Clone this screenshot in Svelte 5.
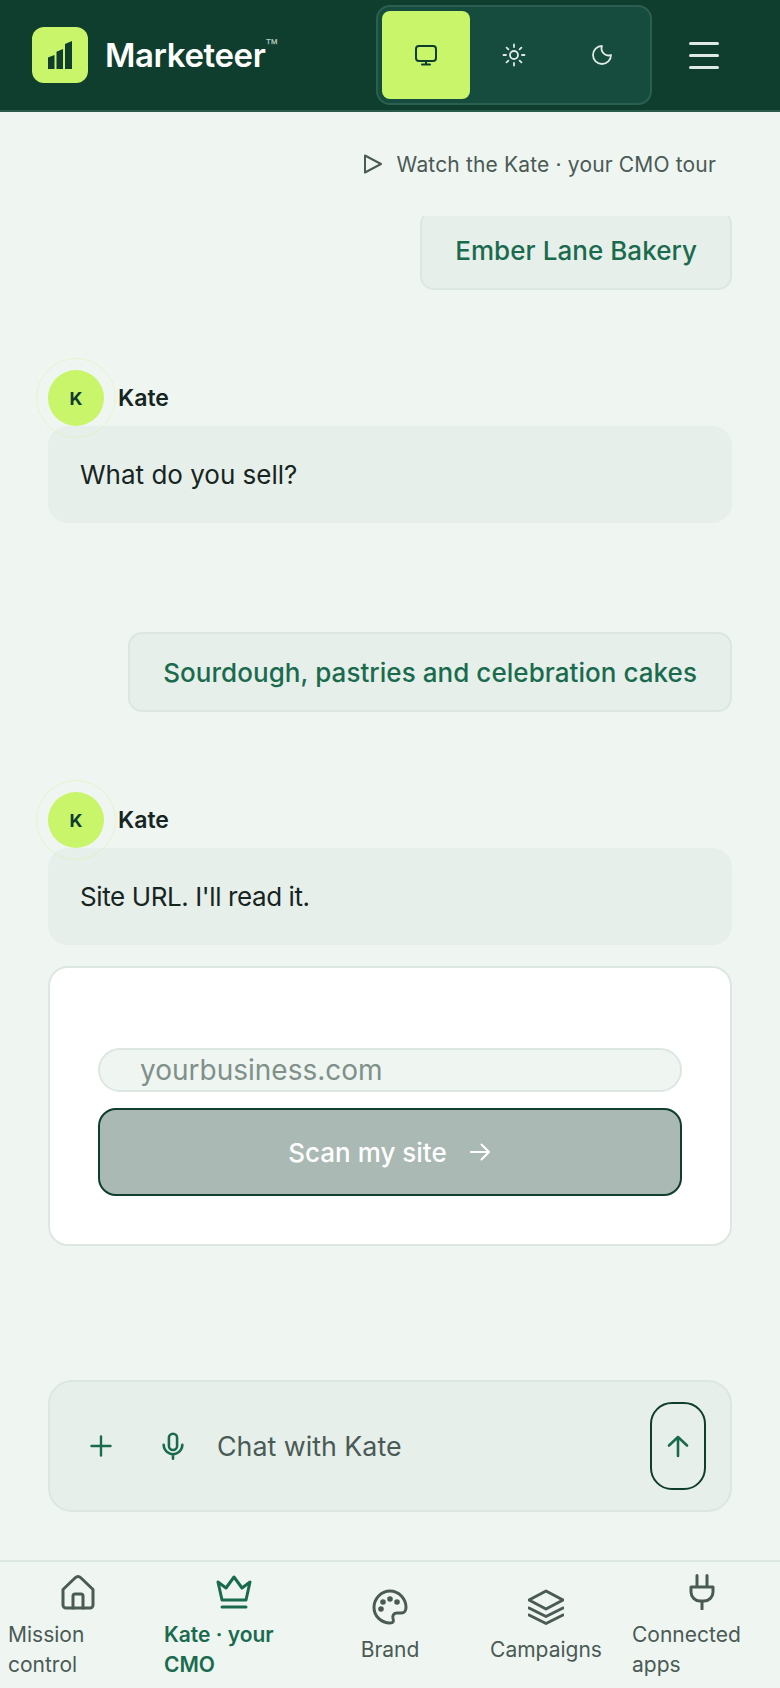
<script>
  const nav = [
    { id: 'home', label: 'Mission control', left: true },
    { id: 'crown', label: 'Kate · your CMO', left: true, active: true },
    { id: 'palette', label: 'Brand' },
    { id: 'layers', label: 'Campaigns' },
    { id: 'plug', label: 'Connected apps', left: true }
  ];
</script>

<div class="page">
  <header class="header">
    <div class="brand">
      <div class="logo">
        <svg viewBox="0 0 24 28" width="24" height="28" fill="#0f3d2e" aria-hidden="true">
          <path d="M0 16.500 6.500 14v14H0zM8.500 10.800 15 8v20H8.500zM17 3 24 0v28h-7z" />
        </svg>
      </div>
      <span class="wordmark">Marketeer<sup>™</sup></span>
    </div>
    <div class="theme">
      <button class="theme-btn on" aria-label="System">
        <svg viewBox="0 0 24 24" width="24" height="24" fill="none" stroke="#0f3d2e" stroke-width="2" stroke-linecap="round" stroke-linejoin="round"><rect x="2" y="3" width="20" height="15" rx="3"/><path d="M8 21.500h8M12 18v3.500"/></svg>
      </button>
      <button class="theme-btn" aria-label="Light">
        <svg viewBox="0 0 24 24" width="24" height="24" fill="none" stroke="#dfe9e5" stroke-width="1.800" stroke-linecap="round"><circle cx="12" cy="12" r="4"/><path d="M12 1.500v2.500M12 20v2.500M1.500 12H4M20 12h2.500M4.600 4.600l1.800 1.800M17.600 17.600l1.800 1.800M4.600 19.400l1.800-1.800M17.600 6.400l1.800-1.800"/></svg>
      </button>
      <button class="theme-btn" aria-label="Dark">
        <svg viewBox="0 0 24 24" width="24" height="24" fill="none" stroke="#dfe9e5" stroke-width="1.800" stroke-linecap="round" stroke-linejoin="round"><path d="M12 3a9 9 0 1 0 9 9 7 7 0 0 1-9-9z"/></svg>
      </button>
    </div>
    <div class="burger" aria-label="Menu"><i></i><i></i><i></i></div>
  </header>

  <main class="main">
    <div class="tour">
      <svg viewBox="0 0 24 24" width="24" height="24" fill="none" stroke="#4a5a55" stroke-width="2" stroke-linejoin="round"><path d="M5 3.500 21 12 5 20.500z"/></svg>
      <span>Watch the Kate · your CMO tour</span>
    </div>

    <div class="thread">
      <div class="bubble user">Ember Lane Bakery</div>

      <div class="who">
        <div class="avatar">K</div><span>Kate</span>
      </div>
      <div class="bubble kate">What do you sell?</div>

      <div class="bubble user second">Sourdough, pastries and celebration cakes</div>

      <div class="who">
        <div class="avatar">K</div><span>Kate</span>
      </div>
      <div class="bubble kate tight">Site URL. I'll read it.</div>

      <div class="card">
        <div class="input">yourbusiness.com</div>
        <div class="scan">
          <span>Scan my site</span>
          <svg viewBox="0 0 24 24" width="24" height="24" fill="none" stroke="#fff" stroke-width="2" stroke-linecap="round" stroke-linejoin="round"><path d="M3 12h18M13.500 4.500 21 12l-7.500 7.500"/></svg>
        </div>
      </div>
    </div>

    <div class="composer">
      <div class="tool">
        <svg viewBox="0 0 24 24" width="24" height="24" fill="none" stroke="#1a6b4e" stroke-width="2.400" stroke-linecap="round"><path d="M12 2.500v19M2.500 12h19"/></svg>
      </div>
      <div class="tool mic">
        <svg viewBox="0 0 24 24" width="28" height="30" fill="none" stroke="#1a6b4e" stroke-width="2.200" stroke-linecap="round"><rect x="8.500" y="1.500" width="7" height="14" rx="3.500"/><path d="M4 11a8 8 0 0 0 16 0M12 19v4"/></svg>
      </div>
      <span class="prompt">Chat with Kate</span>
      <div class="send">
        <svg viewBox="0 0 24 24" width="24" height="24" fill="none" stroke="#1a6b4e" stroke-width="2.600" stroke-linecap="round" stroke-linejoin="round"><path d="M12 22V3M3 11.500 12 3l9 8.500"/></svg>
      </div>
    </div>
  </main>

  <nav class="nav">
    {#each nav as item}
      <div class="nav-item" class:left={item.left} class:active={item.active}>
        <svg class="nav-icon" viewBox="0 0 36 36" width="36" height="36" fill="none" stroke="currentColor" stroke-width="3" stroke-linecap="round" stroke-linejoin="round">
          {#if item.id === 'home'}
            <path d="M3 15.500 15.500 3.500a3.500 3.500 0 0 1 5 0L33 15.500V31a3 3 0 0 1-3 3H6a3 3 0 0 1-3-3z"/><path d="M13 34V22a2 2 0 0 1 2-2h6a2 2 0 0 1 2 2v12"/>
          {:else if item.id === 'crown'}
            <path d="M2 8l8 6 8-11 8 11 8-6-4 18H6z"/><path d="M6 33h24"/>
          {:else if item.id === 'palette'}
            <path d="M18 2C9 2 2 10 2 18.500S9 34 18 34c3.500 0 4-2 3-4.500-1-3 1-5.500 4-5.500h4.500C32 24 34 22 34 18.500 34 10 27 2 18 2z"/>
            <circle cx="11" cy="13" r="1.300" fill="currentColor"/><circle cx="18" cy="10" r="1.300" fill="currentColor"/><circle cx="25" cy="13" r="1.300" fill="currentColor"/><circle cx="9" cy="20" r="1.300" fill="currentColor"/>
          {:else if item.id === 'layers'}
            <path d="M18 2 35 11 18 20 1 11z"/><path d="M1 19l17 8.500L35 19M1 26l17 8.500L35 26"/>
          {:else}
            <path d="M13 1.500V13M23 1.500V13M7 13h22v5a9 9 0 0 1-9 9h-4a9 9 0 0 1-9-9zM18 27v8"/>
          {/if}
        </svg>
        <span>{item.label}</span>
      </div>
    {/each}
  </nav>
</div>

<style>
  :global(body) {
    margin: 0;
    background: #eff5f1;
  }
  .page {
    width: 780px;
    height: 1688px;
    display: flex;
    flex-direction: column;
    overflow: hidden;
    background: #eff5f1;
    font-family: "Inter", "Noto Sans", sans-serif;
    color: #16251f;
  }
  .header {
    flex: none;
    height: 110px;
    border-bottom: 2px solid #2a5a4c;
    background: #0f3d2e;
    display: flex;
    align-items: center;
    padding: 0 61px 0 32px;
  }
  .brand {
    display: flex;
    align-items: center;
    gap: 17px;
    flex: 1;
  }
  .logo {
    width: 56px;
    height: 56px;
    border-radius: 12px;
    background: #c8f56a;
    display: flex;
    align-items: center;
    justify-content: center;
  }
  .wordmark {
    color: #fff;
    font-size: 33px;
    font-weight: 600;
    letter-spacing: -0.4px;
  }
  .wordmark sup {
    font-size: 20px;
    font-weight: 500;
    color: #a9c2b8;
    vertical-align: 13px;
    line-height: 0;
    letter-spacing: 0;
  }
  .theme {
    width: 276px;
    height: 100px;
    box-sizing: border-box;
    border: 2px solid #2b5f50;
    border-radius: 14px;
    background: #164c3d;
    padding: 4px;
    display: flex;
    margin-right: 37px;
  }
  .theme-btn {
    width: 88px;
    height: 88px;
    border: 0;
    background: none;
    padding: 0;
    border-radius: 8px;
    display: flex;
    align-items: center;
    justify-content: center;
  }
  .theme-btn.on {
    background: #c8f56a;
  }
  .burger {
    width: 30px;
    display: flex;
    flex-direction: column;
    gap: 9px;
  }
  .burger i {
    display: block;
    height: 3px;
    border-radius: 2px;
    background: #dfe9e5;
  }
  .main {
    flex: 1;
    min-height: 0;
    display: flex;
    flex-direction: column;
    padding: 0 48px 48px;
  }
  .tour {
    flex: none;
    height: 104px;
    display: flex;
    align-items: center;
    justify-content: flex-end;
    gap: 13px;
    padding-right: 16px;
    color: #4a5a55;
    font-size: 21px;
    letter-spacing: 0.16px;
  }
  .tour svg {
    flex: none;
  }
  .thread {
    flex: 1;
    min-height: 0;
    clip-path: inset(0 -20px);
    display: flex;
    flex-direction: column;
    justify-content: flex-end;
    padding-bottom: 134px;
  }
  .bubble {
    flex: none;
    box-sizing: border-box;
    font-size: 26px;
  }
  .user {
    align-self: flex-end;
    height: 80px;
    display: flex;
    align-items: center;
    padding: 0 33px;
    background: #e7efea;
    border: 2px solid #dde7e2;
    border-radius: 14px;
    color: #1a6b4e;
    font-weight: 450;
    letter-spacing: 0.05px;
  }
  .user.second {
    margin-top: 109px;
  }
  .who {
    flex: none;
    display: flex;
    align-items: center;
    gap: 14px;
    height: 56px;
    margin-top: 80px;
    font-size: 23px;
    font-weight: 600;
  }
  .avatar {
    position: relative;
    z-index: 1;
    width: 56px;
    height: 56px;
    border-radius: 50%;
    background: #c8f56a;
    color: #0f3d2e;
    font-size: 18px;
    font-weight: 700;
    display: flex;
    align-items: center;
    justify-content: center;
    outline: 1px solid rgba(200, 245, 106, 0.28);
    outline-offset: 11px;
  }
  .kate {
    height: 97px;
    display: flex;
    align-items: center;
    padding: 0 32px;
    background: #e7efea;
    border-radius: 20px;
  }
  .tight {
    letter-spacing: -0.4px;
  }
  .card {
    flex: none;
    margin-top: 21px;
    height: 280px;
    box-sizing: border-box;
    padding: 80px 48px 48px;
    background: #fff;
    border: 2px solid #dde7e2;
    border-radius: 20px;
  }
  .input {
    height: 44px;
    box-sizing: border-box;
    border: 2px solid #dde7e2;
    border-radius: 22px;
    background: #eff5f1;
    padding-left: 40px;
    font-size: 28px;
    line-height: 40px;
    color: #80908a;
  }
  .scan {
    margin-top: 16px;
    height: 88px;
    box-sizing: border-box;
    border: 2px solid #0f3d2e;
    border-radius: 18px;
    background: #abb9b4;
    color: #fff;
    font-size: 26px;
    font-weight: 500;
    display: flex;
    align-items: center;
    justify-content: center;
    gap: 21px;
  }
  .composer {
    flex: none;
    height: 132px;
    box-sizing: border-box;
    display: flex;
    align-items: center;
    padding: 0 24px;
    background: #e7efea;
    border: 2px solid #dde7e2;
    border-radius: 24px;
  }
  .tool {
    width: 54px;
    height: 54px;
    display: flex;
    align-items: center;
    justify-content: center;
    margin-right: 18px;
  }
  .tool.mic {
    margin-right: 17px;
  }
  .prompt {
    flex: 1;
    font-size: 26.800px;
    color: #4a5a55;
  }
  .send {
    width: 56px;
    height: 88px;
    box-sizing: border-box;
    border: 2px solid #0f3d2e;
    border-radius: 22px;
    display: flex;
    align-items: center;
    justify-content: center;
  }
  .nav {
    flex: none;
    height: 126px;
    border-top: 2px solid #dde7e2;
    display: grid;
    grid-template-columns: repeat(5, 156px);
  }
  .nav-item {
    display: flex;
    flex-direction: column;
    align-items: center;
    justify-content: center;
    box-sizing: border-box;
    padding-top: 3px;
    color: #4a5a55;
    font-size: 21px;
    line-height: 30px;
    gap: 10px;
    text-align: center;
  }
  .nav-item.left {
    text-align: left;
  }
  .nav-item.left span {
    align-self: stretch;
    padding: 0 8px;
  }
  .nav-item.active {
    color: #1a6b4e;
    font-weight: 600;
  }
  .nav-icon {
    flex: none;
  }
</style>
